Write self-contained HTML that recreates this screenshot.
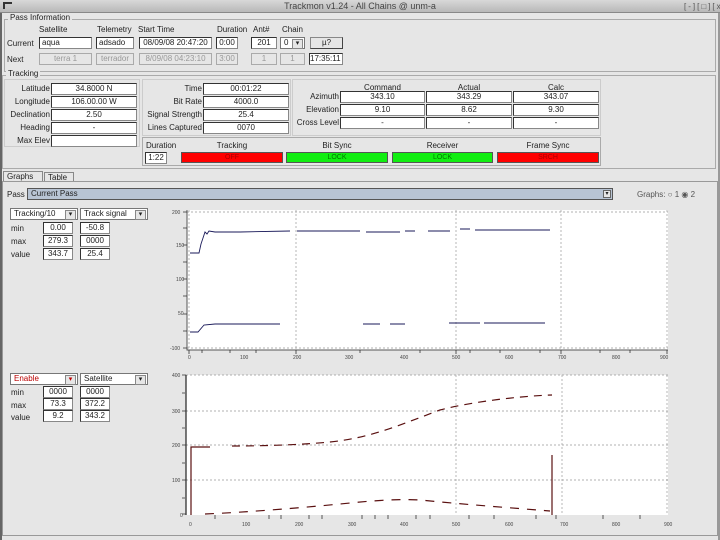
<!DOCTYPE html>
<html><head><meta charset="utf-8"><style>
*{box-sizing:border-box;margin:0;padding:0}
body{width:720px;height:540px;overflow:hidden;background:#e6e6e6;font-family:"Liberation Sans",sans-serif;font-size:8px;color:#222;position:relative}
.a{position:absolute;white-space:nowrap}
.in{position:absolute;background:#fff;border:1px solid #888;border-top-color:#333;border-left-color:#333;height:12px;line-height:10px;text-align:center;font-size:8px;overflow:hidden}
.dis{background:#e6e6e6;color:#999;border-color:#aaa}
.grp{position:absolute;border:1px solid #aaa}
.lbl{position:absolute;text-align:right;line-height:12px}
.bar{position:absolute;height:11px;border:1px solid #555;text-align:center;line-height:9px;font-size:7px}
.cb{position:absolute;background:#fff;border:1px solid #777;height:12px;line-height:10px;padding-left:3px}
.cb:after{content:"▾";position:absolute;right:1px;top:1px;width:9px;height:8px;border:1px solid #888;background:#e6e6e6;font-size:7px;line-height:7px;text-align:center}
</style></head><body>
<div class="a" style="left:0;top:0;width:720px;height:13px;background:linear-gradient(#d8d8d8,#b8b8b8);border-bottom:1px solid #888"></div>
<div class="a" style="left:3px;top:2px;width:9px;height:7px;border-top:2px solid #333;border-left:2px solid #333"></div>
<div class="a" style="left:0;top:1px;width:720px;text-align:center;font-size:9px;color:#444">Trackmon v1.24 - All Chains @ unm-a</div>
<div class="a" style="left:684px;top:2px;font-size:8px;color:#555;letter-spacing:2px">[-][□][x]</div>
<div class="a" style="left:0;top:13px;width:2px;height:527px;background:#666"></div>
<div class="a" style="left:718px;top:13px;width:2px;height:527px;background:#999"></div>

<!-- Pass information -->
<div class="grp" style="left:4px;top:19px;width:712px;height:53px"></div>
<div class="a" style="left:8px;top:13px;background:#e6e6e6;padding:0 2px">Pass Information</div>
<div class="a" style="left:39px;top:25px">Satellite</div>
<div class="a" style="left:97px;top:25px">Telemetry</div>
<div class="a" style="left:138px;top:25px">Start Time</div>
<div class="a" style="left:217px;top:25px">Duration</div>
<div class="a" style="left:253px;top:25px">Ant#</div>
<div class="a" style="left:282px;top:25px">Chain</div>
<div class="a" style="left:7px;top:39px">Current</div>
<div class="in" style="left:39px;top:37px;width:53px;text-align:left;padding-left:2px">aqua</div>
<div class="in" style="left:96px;top:37px;width:38px;text-align:left;padding-left:2px">adsado</div>
<div class="in" style="left:139px;top:37px;width:73px">08/09/08 20:47:20</div>
<div class="in" style="left:216px;top:37px;width:22px">0:00</div>
<div class="in" style="left:251px;top:37px;width:26px">201</div>
<div class="cb" style="left:280px;top:37px;width:25px">0</div>
<div class="a" style="left:310px;top:37px;width:33px;height:12px;border:1px solid #888;border-right-color:#444;border-bottom-color:#444;text-align:center;line-height:10px">µ?</div>
<div class="a" style="left:7px;top:55px">Next</div>
<div class="in dis" style="left:39px;top:53px;width:53px">terra 1</div>
<div class="in dis" style="left:96px;top:53px;width:38px">terrador</div>
<div class="in dis" style="left:139px;top:53px;width:73px">8/09/08 04:23:10</div>
<div class="in dis" style="left:216px;top:53px;width:22px">3:00</div>
<div class="in dis" style="left:251px;top:53px;width:26px">1</div>
<div class="in dis" style="left:280px;top:53px;width:25px">1</div>
<div class="in" style="left:309px;top:53px;width:34px;text-align:left">17:35:11</div>

<!-- Tracking -->
<div class="grp" style="left:2px;top:75px;width:714px;height:94px"></div>
<div class="a" style="left:6px;top:69px;background:#e6e6e6;padding:0 2px">Tracking</div>
<div class="grp" style="left:4px;top:79px;width:136px;height:68px;border-color:#ccc"></div>
<div class="lbl" style="left:4px;top:83px;width:46px">Latitude</div><div class="in" style="left:51px;top:83px;width:86px">34.8000 N</div>
<div class="lbl" style="left:4px;top:96px;width:46px">Longitude</div><div class="in" style="left:51px;top:96px;width:86px">106.00.00 W</div>
<div class="lbl" style="left:4px;top:109px;width:46px">Declination</div><div class="in" style="left:51px;top:109px;width:86px">2.50</div>
<div class="lbl" style="left:4px;top:122px;width:46px">Heading</div><div class="in" style="left:51px;top:122px;width:86px">-</div>
<div class="lbl" style="left:4px;top:135px;width:46px">Max Elev</div><div class="in" style="left:51px;top:135px;width:86px"></div>
<div class="grp" style="left:142px;top:79px;width:149px;height:57px;border-color:#ccc"></div>
<div class="lbl" style="left:142px;top:83px;width:60px">Time</div><div class="in" style="left:203px;top:83px;width:86px">00:01:22</div>
<div class="lbl" style="left:142px;top:96px;width:60px">Bit Rate</div><div class="in" style="left:203px;top:96px;width:86px">4000.0</div>
<div class="lbl" style="left:142px;top:109px;width:60px">Signal Strength</div><div class="in" style="left:203px;top:109px;width:86px">25.4</div>
<div class="lbl" style="left:142px;top:122px;width:60px">Lines Captured</div><div class="in" style="left:203px;top:122px;width:86px">0070</div>
<div class="grp" style="left:292px;top:79px;width:309px;height:57px;border-color:#ccc"></div>
<div class="a" style="left:340px;top:83px;width:85px;text-align:center">Command</div>
<div class="a" style="left:426px;top:83px;width:86px;text-align:center">Actual</div>
<div class="a" style="left:513px;top:83px;width:86px;text-align:center">Calc</div>
<div class="lbl" style="left:292px;top:91px;width:47px">Azimuth</div>
<div class="lbl" style="left:292px;top:104px;width:47px">Elevation</div>
<div class="lbl" style="left:292px;top:117px;width:47px">Cross Level</div>
<div class="in" style="left:340px;top:91px;width:85px">343.10</div><div class="in" style="left:426px;top:91px;width:86px">343.29</div><div class="in" style="left:513px;top:91px;width:86px">343.07</div>
<div class="in" style="left:340px;top:104px;width:85px">9.10</div><div class="in" style="left:426px;top:104px;width:86px">8.62</div><div class="in" style="left:513px;top:104px;width:86px">9.30</div>
<div class="in" style="left:340px;top:117px;width:85px">-</div><div class="in" style="left:426px;top:117px;width:86px">-</div><div class="in" style="left:513px;top:117px;width:86px">-</div>
<div class="grp" style="left:142px;top:137px;width:459px;height:29px;border-color:#aaa"></div>
<div class="a" style="left:146px;top:141px">Duration</div>
<div class="in" style="left:145px;top:152px;width:22px">1:22</div>
<div class="a" style="left:181px;top:141px;width:102px;text-align:center">Tracking</div>
<div class="a" style="left:286px;top:141px;width:102px;text-align:center">Bit Sync</div>
<div class="a" style="left:392px;top:141px;width:101px;text-align:center">Receiver</div>
<div class="a" style="left:497px;top:141px;width:102px;text-align:center">Frame Sync</div>
<div class="bar" style="left:181px;top:152px;width:102px;background:#f00;color:#a00">OFF</div>
<div class="bar" style="left:286px;top:152px;width:102px;background:#1e1;color:#070">LOCK</div>
<div class="bar" style="left:392px;top:152px;width:101px;background:#1e1;color:#070">LOCK</div>
<div class="bar" style="left:497px;top:152px;width:102px;background:#f00;color:#a00">SRCH</div>

<!-- Tabs -->
<div class="a" style="left:3px;top:171px;width:40px;height:11px;border:1px solid #888;border-bottom:none;background:#e6e6e6;line-height:9px;padding-left:3px">Graphs</div>
<div class="a" style="left:44px;top:172px;width:30px;height:10px;border:1px solid #888;border-bottom:none;line-height:9px;padding-left:3px">Table</div>
<div class="grp" style="left:2px;top:181px;width:716px;height:355px;border-color:#999"></div>
<div class="a" style="left:7px;top:190px">Pass</div>
<div class="a" style="left:27px;top:188px;width:586px;height:12px;background:#b8c4d4;border:1px solid #555;line-height:10px;padding-left:3px">Current Pass</div>
<div class="a" style="left:603px;top:190px;width:8px;height:8px;border:1px solid #666;background:#e6e6e6;font-size:6px;line-height:6px;text-align:center">▾</div>
<div class="a" style="left:637px;top:190px;color:#555">Graphs: ○ 1 ◉ 2</div>

<!-- Graph 1 controls -->
<div class="cb" style="left:10px;top:208px;width:68px">Tracking/10</div>
<div class="cb" style="left:80px;top:208px;width:68px">Track signal</div>
<div class="a" style="left:11px;top:224px">min</div><div class="a" style="left:11px;top:237px">max</div><div class="a" style="left:11px;top:250px">value</div>
<div class="in" style="left:43px;top:222px;width:30px">0.00</div><div class="in" style="left:80px;top:222px;width:30px">-50.8</div>
<div class="in" style="left:43px;top:235px;width:30px">279.3</div><div class="in" style="left:80px;top:235px;width:30px">0000</div>
<div class="in" style="left:43px;top:248px;width:30px">343.7</div><div class="in" style="left:80px;top:248px;width:30px">25.4</div>

<!-- Graph 2 controls -->
<div class="cb" style="left:10px;top:373px;width:68px;color:#b00">Enable</div>
<div class="cb" style="left:80px;top:373px;width:68px">Satellite</div>
<div class="a" style="left:11px;top:388px">min</div><div class="a" style="left:11px;top:401px">max</div><div class="a" style="left:11px;top:413px">value</div>
<div class="in" style="left:43px;top:386px;width:30px">0000</div><div class="in" style="left:80px;top:386px;width:30px">0000</div>
<div class="in" style="left:43px;top:398px;width:30px">73.3</div><div class="in" style="left:80px;top:398px;width:30px">372.2</div>
<div class="in" style="left:43px;top:410px;width:30px">9.2</div><div class="in" style="left:80px;top:410px;width:30px">343.2</div>

<svg class="a" style="left:0;top:0" width="720" height="540" font-family="Liberation Sans" font-size="5" fill="#444">
<g>
<rect x="187" y="210" width="481" height="140" fill="#fff"/>
<g stroke="#999" stroke-dasharray="2,2" stroke-width="0.7" fill="none">
<path d="M187 212H668M187 348H668M189 210V350M296 210V350M456 210V350M561 210V350M667 210V350"/>
</g>
<path d="M187 210V350H668" stroke="#555" fill="none"/>
<g stroke="#333" stroke-width="0.8">
<path d="M183 212h4M183 228h4M183 245h4M183 262h4M183 279h4M183 296h4M183 314h4M183 331h4M183 348h4"/>
<path d="M189 350v4M202 350v3M230 350v3M256 350v3M296 350v4M360 350v3M420 350v3M456 350v4M470 350v3M500 350v3M540 350v3M561 350v4M600 350v3M630 350v3M667 350v4"/>
</g>
<text x="172" y="214">200</text><text x="176" y="247">150</text><text x="176" y="281">100</text><text x="178" y="315">50</text><text x="170" y="350">-100</text>
<text x="188" y="359">0</text><text x="240" y="359">100</text><text x="293" y="359">200</text><text x="345" y="359">300</text><text x="400" y="359">400</text><text x="452" y="359">500</text><text x="505" y="359">600</text><text x="558" y="359">700</text><text x="612" y="359">800</text><text x="660" y="359">900</text>
<g stroke="#1a1a5a" stroke-width="0.9" fill="none">
<path d="M190 253H199L201 244 203 238 205 232 207 234 209 231 215 232 240 232 290 231"/>
<path d="M297 231H360M366 232H400M405 231H415M428 231H450M460 229H470M475 230H550"/>
<path d="M190 332H198L204 325 215 324 230 324H270M270 324h10M363 324H380M390 324H405M449 323H480M484 323H545"/>
</g>
</g>
<g>
<rect x="186" y="375" width="482" height="140" fill="#fff"/>
<g stroke="#999" stroke-dasharray="2,2" stroke-width="0.7" fill="none">
<path d="M186 375H668M186 411H668M186 445H668M186 480H668M456 375V515M562 375V515M667 375V515"/>
</g>
<path d="M186 375V515" stroke="#222" fill="none" stroke-width="1.2"/>
<g stroke="#333" stroke-width="0.8">
<path d="M182 375h4M182 393h3M182 411h4M182 428h3M182 445h4M182 463h3M182 480h4M182 498h3M182 514h4"/>
<path d="M215 515v4M269 515v4M281 515v4M309 515v4M322 515v4M362 515v4M375 515v4M388 515v4M416 515v4M430 515v4M469 515v4M494 515v4M536 515v4M556 515v4M603 515v4M640 515v4"/>
</g>
<text x="172" y="377">400</text><text x="172" y="413">300</text><text x="172" y="447">200</text><text x="172" y="482">100</text><text x="180" y="517">0</text>
<text x="189" y="526">0</text><text x="242" y="526">100</text><text x="295" y="526">200</text><text x="348" y="526">300</text><text x="400" y="526">400</text><text x="452" y="526">500</text><text x="505" y="526">600</text><text x="560" y="526">700</text><text x="612" y="526">800</text><text x="664" y="526">900</text>
<g stroke="#5a1010" stroke-width="1.2" fill="none">
<path d="M191 515V447H210" />
<path d="M232 446C260 446 300 445 330 442C370 438 400 425 440 410C470 402 520 396 552 395" stroke-dasharray="8,6"/>
<path d="M205 514C250 512 300 508 350 503C380 500 400 499 420 500C460 504 500 507 550 511" stroke-dasharray="9,8"/>
<path d="M552 515V455"/>
</g>
</g>
</svg>
</body></html>
